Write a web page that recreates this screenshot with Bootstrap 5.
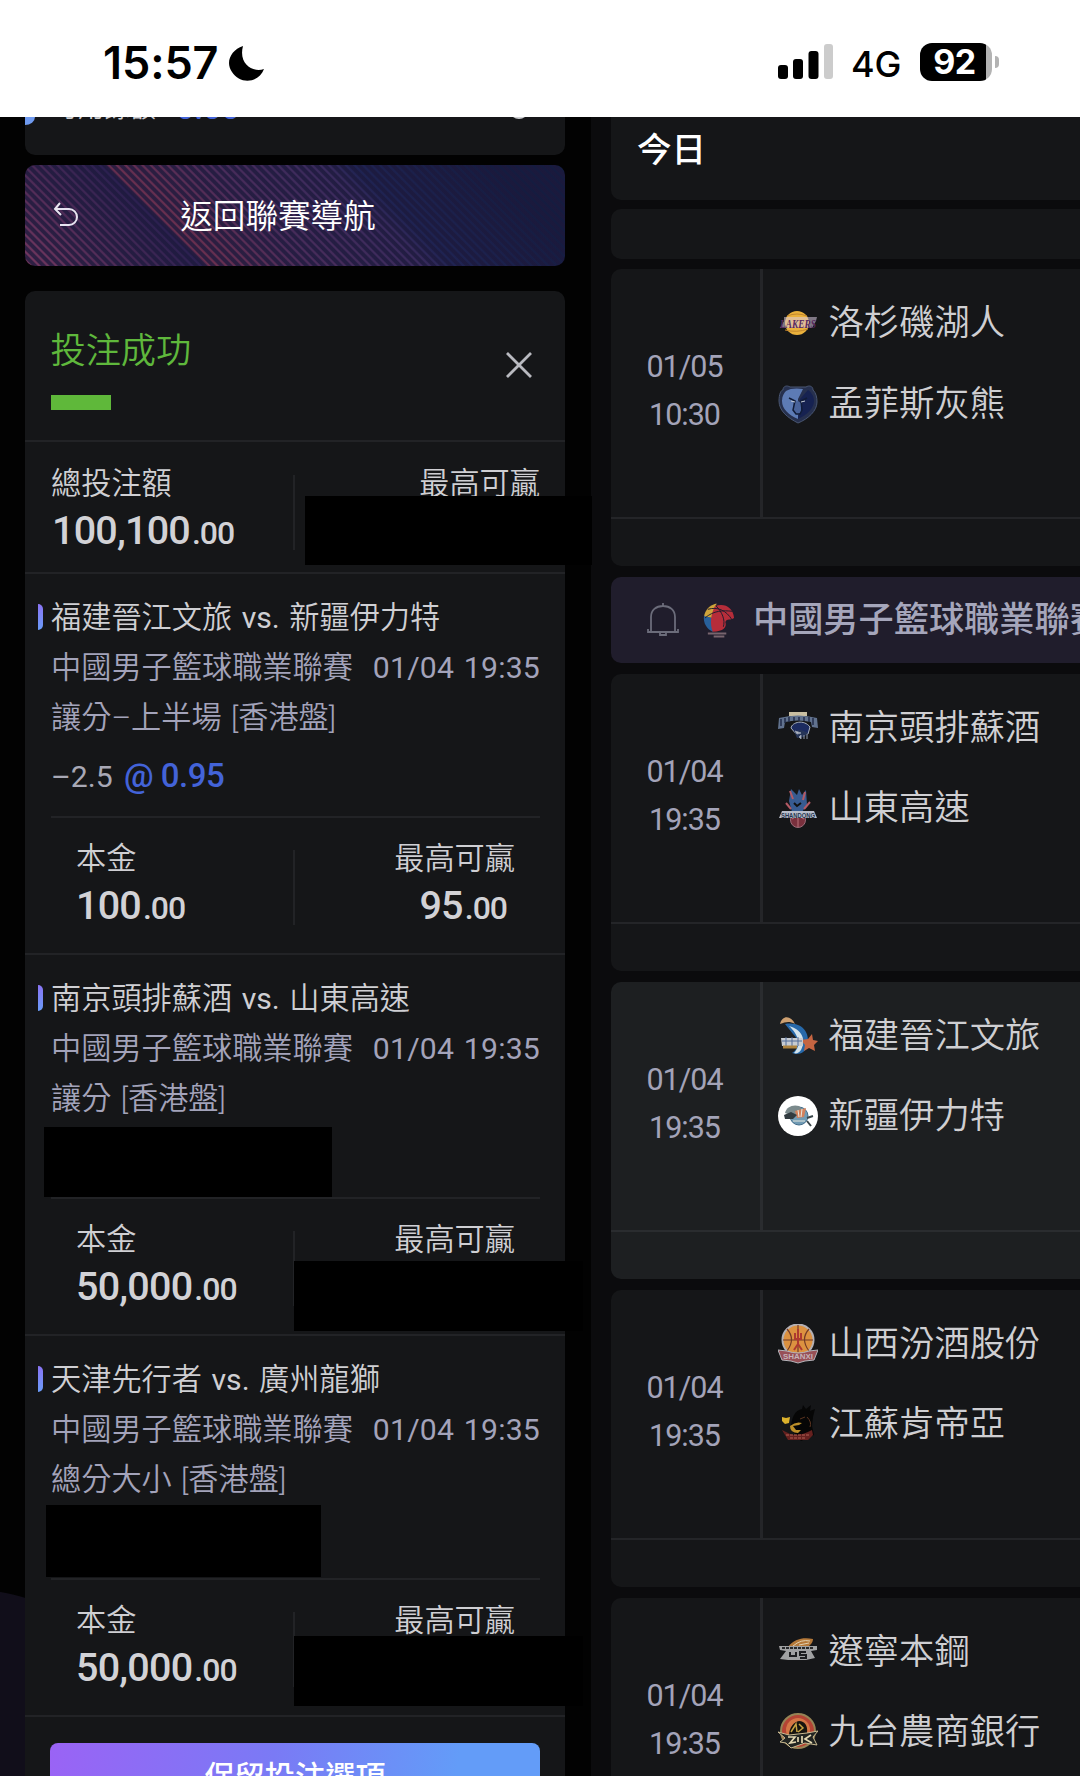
<!DOCTYPE html>
<html lang="zh-Hant">
<head>
  <meta charset="UTF-8" />
  <meta name="viewport" content="width=device-width, initial-scale=1" />
  <title>投注成功</title>
  <link href="https://cdn.jsdelivr.net/npm/bootstrap@5.3.0/dist/css/bootstrap.min.css" rel="stylesheet" />
  <style>
    body {
      width: 1080px;
      height: 1776px;
      overflow: hidden;
      background: #020202;
      color: #cfcfd3;
      font-family: Roboto, "Noto Sans CJK TC", sans-serif;
      font-size: 30.2px;
      font-weight: 350;
      line-height: 50.5px;
      white-space: nowrap;
    }

    /* Status bar */
    .status-bar { height: 117px; padding: 7px 81px 0 103px; font-family: Inter, sans-serif; }
    .clock { font-size: 45px; font-weight: 600; letter-spacing: -.1px; padding-top: 2px; }
    .moon { margin-left: 11px; }
    .net-type { font-size: 36px; font-weight: 500; letter-spacing: -.3px; margin: 0 19px 0 17px; }
    .battery { width: 72px; height: 38px; border-radius: 12px; background: linear-gradient(90deg, #000 66px, #b3b3b3 66px); font-size: 34px; font-weight: 700; line-height: 38px; padding-right: 3px; letter-spacing: -.5px; }
    .battery-tip { width: 4px; height: 12px; margin-left: 3px; border-radius: 0 5px 5px 0; background: #b3b3b3; }

    /* Left column */
    .slip-col { width: 591px; height: 1659px; padding: 0 26px 0 25px; background: radial-gradient(circle at -30px 1656px, #110e1a 183px, transparent 184px); }
    .panel { background: #151618; border-radius: 10px; }
    .balance { height: 38px; border-radius: 0 0 10px 10px; overflow: hidden; margin-bottom: 10px; line-height: 30px; padding-left: 27px; }
    .balance > * { margin-top: -24px; height: 30px; }
    .balance-dot { width: 20px; height: 20px; border-radius: 50%; background: #cfd0d3; margin: -18px 36px 0 auto !important; }
    .balance-knob { width: 20px; height: 16px; border-radius: 50%; background: #6f9af0; margin: -8px 17px 0 -37px !important; }
    .back-btn {
      height: 101px;
      border-radius: 10px;
      margin-bottom: 25px;
      padding-top: 4px;
      color: #fff;
      font-size: 32.6px;
      background:
        repeating-linear-gradient(45deg, rgba(28, 25, 60, .78) 0 2.6px, transparent 3.8px 4.8px, rgba(28, 25, 60, .78) 6px),
        linear-gradient(45deg, #74375e 0, #2b2050 126px, #6b2f4e 131px, #4a2c5a 200px, #382a5c 284px, #1f2352 302px, #151c40 400px);
    }
    .back-icon { left: 28px; top: 37px; }
    .slip-head { height: 151px; padding: 34px 33px 0 25.5px; border-bottom: 2px solid #222326; }
    .slip-title { color: #5fb83c; font-size: 35.2px; line-height: 52px; }
    .green-bar { width: 60px; height: 15px; margin-top: 18px; background: #5fb83a; }
    .summary { height: 132px; padding: 2px 25px 0 26px; border-bottom: 2px solid #222326; }
    .bet { height: 381px; padding: 19px 25px 0 26px; border-bottom: 2px solid #222326; word-spacing: 2px; }
    .bet-mark { left: -13px; top: 11px; width: 5px; height: 26px; border-radius: 0 5px 5px 0; background: linear-gradient(#8a74f5, #6a9cf8); }
    .bet-line { height: 50px; }
    .latin { font-weight: 400; }
    .muted-text { color: #a3a3ba; }
    .bet-date { letter-spacing: .2px; }
    .odds-row { height: 75px; padding-top: 8px; border-bottom: 2px solid #222326; color: #a8a8b5; word-spacing: 0; }
    .odds { color: #4363d8; font-weight: 500; font-size: 33px; letter-spacing: -.5px; }
    .stake { padding-top: 16px; }
    .bet .stake { padding: 17px 25px 0 25px; }
    .stake-label { line-height: 48px; }
    .stake-sep { width: 2px; height: 75px; margin: 15px 2px 0 -2px; background: #222326; }
    .amount { line-height: 46px; font-size: 39.5px; font-weight: 500; color: #d2d2d6; letter-spacing: -.8px; padding-left: 1px; }
    .amount small { font-size: 32px; margin-left: 2px; letter-spacing: -1px; font-weight: 500; }
    .bet .amount { padding-left: 0; }
    .cover { background: #000; z-index: 2; }
    .keep-btn { height: 70px; margin: 26px 25px 0 25px; border-radius: 8px; color: #fff; font-weight: 500; line-height: 70px; background: linear-gradient(100deg, #9a63f5, #7a7af5 45%, #639cf8 82%); }

    /* Right column */
    .match-col { width: 489px; height: 1659px; padding-left: 20px; background: #0b0b0d; overflow: hidden; }
    .match-col .panel, .league { margin-right: -20px; }
    .day-head { height: 83px; margin-bottom: 9px; padding: 8px 26px; border-radius: 0 0 0 10px; color: #fff; font-size: 34.5px; font-weight: 500; }
    .strip { height: 50px; margin-bottom: 10px; }
    .league { height: 86px; margin-bottom: 10.5px; padding-left: 36px; border-radius: 10px; background: #201d2c; color: #a5a6bb; font-size: 35.2px; font-weight: 500; }
    .league-logo { margin: 0 17px 0 24px; }
    .match { height: 297px; margin-bottom: 11px; overflow: hidden; }
    .match.live { background: #1d1f21; }
    .match.live .match-main, .match.live .kickoff { border-color: #2a2c2f; }
    .match-main { height: 250px; border-bottom: 2px solid #242528; }
    .kickoff { width: 152px; border-right: 3px solid #242528; padding: 74px 2px 0 0; color: #a3a3b8; font-size: 30.5px; font-weight: 450; line-height: 48px; letter-spacing: -1px; box-sizing: border-box; }
    .teams { padding: 14px 0 0 15px; font-size: 35.3px; color: #cfcfd2; }
    .team { height: 80.5px; gap: 10.5px; }
  </style>
</head>
<body>
  <!-- Status bar -->
  <header class="status-bar bg-white text-black d-flex align-items-center">
    <span class="clock">15:57</span>
    <svg class="moon mt-1" width="38" height="38" viewBox="0 0 38 38"><path d="M14 1C2 5-4 17 3 27c8 13 27 11 32-3C25 28 9 20 14 1z" fill="#000" /></svg>
    <svg class="ms-auto" width="56" height="36" viewBox="0 0 56 36">
      <rect x="0" y="21" width="10" height="14" rx="3" />
      <rect x="15" y="15" width="10" height="20" rx="3" />
      <rect x="30.500" y="7" width="10" height="28" rx="3" />
      <rect x="46" y="0" width="9" height="35" rx="3" fill="#ccc" />
    </svg>
    <span class="net-type pt-1">4G</span>
    <span class="battery text-white text-center">92</span>
    <span class="battery-tip"></span>
  </header>

  <main class="d-flex">
    <!-- Bet slip -->
    <section class="slip-col flex-shrink-0">
      <div class="panel balance d-flex">
        <span class="balance-knob"></span>
        <span style="font-size:26px">可用餘額</span>
        <span class="odds ms-3 ps-1">0.00</span>
        <span class="balance-dot"></span>
      </div>
      <div class="back-btn d-flex align-items-center position-relative">
        <svg class="back-icon position-absolute" width="26" height="26" viewBox="0 0 26 26" fill="none" stroke="#e8e4f0" stroke-width="2"><path d="M7 1L2 7l6 6M2 7h14a8 8 0 0 1 0 16H7" /></svg>
        <span class="mx-auto" style="padding-right:34px">返回聯賽導航</span>
      </div>
      <div class="panel">
        <div class="slip-head d-flex justify-content-between">
          <div>
            <div class="slip-title">投注成功</div>
            <div class="green-bar"></div>
          </div>
          <svg style="margin-top:22px" width="26" height="34" viewBox="0 0 26 34" fill="none" stroke="#b9bac0" stroke-width="2.800"><path d="M1 6l24 24M25 6L1 30" /></svg>
        </div>
        <div class="summary position-relative">
          <div class="stake d-flex">
            <div class="col">
              <div class="stake-label">總投注額</div>
              <div class="amount">100,100<small>.00</small></div>
            </div>
            <div class="stake-sep"></div>
            <div class="col text-end">
              <div class="stake-label">最高可贏</div>
            </div>
          </div>
          <div class="cover position-absolute" style="left:280px;top:54px;width:287px;height:69px"></div>
        </div>
        <div id="bets"></div>
        <div class="keep-btn text-center">保留投注選項</div>
      </div>
    </section>

    <!-- Matches -->
    <section class="match-col">
      <div class="panel day-head">今日</div>
      <div class="panel strip"></div>
      <div id="nba"></div>
      <div class="league d-flex align-items-center">
        <svg class="flex-shrink-0" width="32" height="36" viewBox="0 0 32 36" fill="none" stroke="#6b6c7a" stroke-width="1.800"><path d="M4 30V15C4 8 9 4 16 4s12 4 12 11v15M1 27v3h30v-3M16 4V1M13 31v2h6v-2" /></svg>
        <svg class="league-logo flex-shrink-0" width="33" height="36" viewBox="0 0 34 36">
          <path d="M14 1C7 3 2 7 1 15l9 1z" fill="#cfa43b" />
          <path d="M1 14c-1 7 3 14 9 16l4-13z" fill="#28609b" />
          <path d="M10 30c-3-9-2-17 2-26C22 0 31 5 32 16c-4 3-7 0-9 4 2 5-2 10-13 10z" fill="#b62d3a" />
          <path d="M5 7c10-3 19 1 25 11M2 16c9-8 19-8 28-7M13 3c7 7 10 15 8 22" fill="none" stroke="#201d2c" />
          <path d="M5 32h19M11 35h11" stroke="#78656e" stroke-width="2" />
        </svg>
        <span>中國男子籃球職業聯賽</span>
      </div>
      <div id="cba"></div>
    </section>
  </main>

  <!-- Team logos -->
  <svg class="d-none">
    <symbol id="lakers" viewBox="0 0 40 40">
      <circle cx="19" cy="20" r="12" fill="#eab13c" />
      <path d="M9 13q10-4 20 0M7 27q12 3 23-1" fill="none" stroke="#c2862e" />
      <path d="M6 14h33l-1 4-4 7H2l4-7z" fill="#d8cbe0" opacity=".55" />
      <text x="2" y="25" font-family="Liberation Serif" font-size="12" font-weight="700" font-style="italic" textLength="36" lengthAdjust="spacingAndGlyphs" fill="#58295e">LAKERS</text>
    </symbol>
    <symbol id="grizzlies" viewBox="0 0 40 40">
      <path d="M20 39C10 34 1 27 1 17 1 10 3 6 5 6c0-4 4-5 7-3h16c3-2 7-1 7 3 3 3 4 7 4 12 0 9-9 17-19 21z" fill="#26304e" stroke="#4a5772" />
      <path d="M20 35C11 31 4 25 4 17c0-5 2-8 4-10 4-3 12-3 17-2l-5 10z" fill="#5d7bb5" />
      <path d="M20 35c9-4 16-11 16-18 0-5-3-9-6-11l-8 9z" fill="#162251" />
      <path d="M15 18v8l3 4 2 1 3-3v-9l-3-2z" fill="#49639b" />
      <path d="M11 14l6 3-2 9 3 4h4l2-4-1-9 6-3" fill="none" stroke="#111c38" stroke-width="1.500" />
      <path d="M13 17l4 1M23 18l4-1" stroke="#c2cad4" />
    </symbol>
    <symbol id="nanjing" viewBox="0 0 40 40">
      <path d="M11 4h18v4H11z" fill="#c9bfa2" />
      <path d="M1 10q19-5 38 0l1 10-6-1-1-5q-13-3-26 0l-1 6-6 1z" fill="#61728e" />
      <path d="M3 11v7M7 10v5M11 9v5M16 9v4M21 9v4M26 9v4M31 9v5M35 10v7" stroke="#222d49" stroke-width="1.500" />
      <path d="M13 20c1-6 13-9 19-1l-2 7-5-2-6 3z" fill="#1c2b60" stroke="#aab2c0" />
      <path d="M16 23l7-1 7 3-4 4-7 1z" fill="#263557" />
      <path d="M17 23l6 2-4 1zM21 29l2-2v4zM26 27v4M29 26v5" fill="#c7cad0" stroke="#8f98aa" />
    </symbol>
    <symbol id="shandong" viewBox="0 0 40 40">
      <path d="M11 13L13 1l6 6 2-6 3 6 4-5 1 15-5 7H14z" fill="#385b91" />
      <path d="M12 3l3 8M27 4l-2 8M8 15l5 6M32 14l-6 7" stroke="#b45a65" stroke-width="2" />
      <circle cx="20" cy="32" r="7.500" fill="#79303d" stroke="#9c6c79" />
      <path d="M14 31q6-5 12 0M20 25v14" fill="none" stroke="#b9737b" />
      <path d="M4 23h32l3 7H1z" fill="#b8bdca" />
      <text x="3" y="29.500" font-family="Liberation Sans" font-size="7" font-weight="700" textLength="34" lengthAdjust="spacingAndGlyphs" fill="#26364f">SHANDONG</text>
      <path d="M16 15l3 3 4-3" fill="none" stroke="#111" stroke-width="2" />
    </symbol>
    <symbol id="fujian" viewBox="0 0 40 40">
      <path d="M2 8c2-9 11-9 15 0C11 5 8 6 2 8z" fill="#cda071" />
      <path d="M7 8c18-3 26 10 22 23-3 7-9 8-15 6 7-4 8-13 1-19z" fill="#2769aa" />
      <path d="M11 10c12 3 18 13 12 24-2 3-5 4-7 3 8-8 4-19-5-27z" fill="#d2e2eb" />
      <path d="M34 18l1 6 5 1-4 4 1 6-6-3-5 3 1-6-4-5 7-1z" fill="#c56542" />
      <path d="M3 22h22v8H4z" fill="#c6cbd1" />
      <path d="M4 25h20M8 21v9M14 21v9M20 21v9" stroke="#526d98" />
      <path d="M5 31h14" stroke="#ad823d" stroke-width="3" />
    </symbol>
    <symbol id="xinjiang" viewBox="0 0 40 40">
      <circle cx="20" cy="20" r="20" fill="#fff" />
      <circle cx="21" cy="20" r="9" fill="#719bb4" stroke="#426d8b" />
      <path d="M7 17c1-6 8-9 14-7l5 5-10 5z" fill="#7b8a8c" />
      <path d="M17 15l11-3-2 9-7 1z" fill="#d3815c" />
      <path d="M6 19l7-3 6 3-4 4H7z" fill="#313b40" />
      <path d="M20 14l1 7M24 13l-1 8M15 25h12" stroke="#e8e8de" />
      <path d="M29 22l6-2M29 25l4 5" stroke="#394549" stroke-width="2" />
    </symbol>
    <symbol id="shanxi" viewBox="0 0 40 40">
      <circle cx="20" cy="16" r="15.500" fill="#dc9140" stroke="#b4b0b4" stroke-width="2" />
      <path d="M20 1v27M5 16h30M9 5q9 10 0 22M31 5q-9 10 0 22" fill="none" stroke="#723a27" stroke-width="1.200" />
      <path d="M17 9v6h6V9M20 5v15l-4 6M20 20l4 6" fill="none" stroke="#ae3930" stroke-width="2" />
      <path d="M0 26l9 1q11 4 22 0l9-1-4 10-9 1-7 2-7-2-9-1z" fill="#985057" stroke="#b4b5bb" />
      <text x="5" y="35" font-family="Liberation Sans" font-size="8" font-weight="700" textLength="30" lengthAdjust="spacingAndGlyphs" fill="#c6b2b8">SHANXI</text>
    </symbol>
    <symbol id="jiangsu" viewBox="0 0 40 40">
      <path d="M13 25C13 14 17 6 24 5l1-4 3 4 5-4-1 6 5-2-2 8-1 9 2 9-13 6z" fill="#060606" />
      <path d="M4 13l4 1 4-1-1 6-4 1-3-3z" fill="#dbb12c" />
      <path d="M12 22q6-5 12-3l-3 2-6 1 3 4h5l-3 3q-8 0-8-7z" fill="#bd8f29" />
      <path d="M29 13q5 5 3 10M22 15l5-2" stroke="#5b3420" fill="none" />
      <path d="M4 26l8 4q9 3 22-4l1 5-5 5H10z" fill="#65211f" />
      <path d="M8 31h24M12 34h16" stroke="#b36155" stroke-dasharray="3 1" />
    </symbol>
    <symbol id="liaoning" viewBox="0 0 40 40">
      <path d="M10 15C16 7 25 5 35 7c0 5-5 9-13 9z" fill="#b57939" />
      <path d="M15 14q8-7 17-5M21 13l10-2" fill="none" stroke="#e1cfae" />
      <path d="M1 14h38v4l-6 1 4 7-9 2H10l-8-1 6-8-6-1z" fill="#a0a1a2" />
      <path d="M4 16h32" stroke="#27282a" stroke-width="2" stroke-dasharray="3 1" />
      <path d="M12 20v4h6v-4M28 20h-6v3h6v3h-6" fill="none" stroke="#1d1e20" stroke-width="2" />
    </symbol>
    <symbol id="jiutai" viewBox="0 0 40 40">
      <circle cx="20" cy="19" r="17" fill="#b54434" stroke="#968355" stroke-width="2" />
      <circle cx="20" cy="18" r="12" fill="#d47645" />
      <path d="M11 24c0-9 5-14 10-15 6 0 9 5 8 12l-5 3z" fill="#17140f" />
      <path d="M13 20l5-8 1 8M21 12l4 4-5 4" fill="none" stroke="#c6a243" stroke-width="1.500" />
      <path d="M0 20l11 3 18-2 11-2-5 6 4 8-12-2-14 5-5-5-6-1 5-4z" fill="#222522" stroke="#c9ba91" />
      <path d="M10 25h7l-5 6 6-1M20 25v5M24 24v7M33 23l-6 4 7 4" fill="none" stroke="#e3d8b2" stroke-width="1.700" />
    </symbol>
  </svg>

  <script src="https://cdn.jsdelivr.net/npm/bootstrap@5.3.0/dist/js/bootstrap.bundle.min.js"></script>
  <script>
    const bets = [
      { home: '福建晉江文旅', away: '新疆伊力特', type: '讓分–上半場 [香港盤]', line: '–2.5', odds: '0.95', stake: '100', win: '95', covers: [] },
      { home: '南京頭排蘇酒', away: '山東高速', type: '讓分 [香港盤]', stake: '50,000', covers: [[19, 172, 288, 70], [269, 306, 289, 70]] },
      { home: '天津先行者', away: '廣州龍獅', type: '總分大小 [香港盤]', stake: '50,000', covers: [[21, 169, 275, 72], [269, 300, 289, 70]] }
    ];

    const nba = [
      { date: '01/05', time: '10:30', teams: [['lakers', '洛杉磯湖人'], ['grizzlies', '孟菲斯灰熊']] }
    ];

    const cba = [
      { date: '01/04', time: '19:35', teams: [['nanjing', '南京頭排蘇酒'], ['shandong', '山東高速']] },
      { date: '01/04', time: '19:35', live: true, teams: [['fujian', '福建晉江文旅'], ['xinjiang', '新疆伊力特']] },
      { date: '01/04', time: '19:35', teams: [['shanxi', '山西汾酒股份'], ['jiangsu', '江蘇肯帝亞']] },
      { date: '01/04', time: '19:35', teams: [['liaoning', '遼寧本鋼'], ['jiutai', '九台農商銀行']] }
    ];

    document.getElementById('bets').innerHTML = bets.map(b => `
      <div class="bet position-relative">
        <div class="bet-line position-relative"><span class="bet-mark position-absolute"></span>${b.home}<span class="latin"> vs. </span>${b.away}</div>
        <div class="bet-line d-flex justify-content-between muted-text"><span>中國男子籃球職業聯賽</span><span class="bet-date latin">01/04 19:35</span></div>
        <div class="bet-line muted-text">${b.type}</div>
        <div class="odds-row">${b.odds ? `<span class="latin">${b.line}</span> <span class="odds ms-1">@ ${b.odds}</span>` : ''}</div>
        <div class="stake d-flex">
          <div class="col">
            <div class="stake-label">本金</div>
            <div class="amount">${b.stake}<small>.00</small></div>
          </div>
          <div class="stake-sep"></div>
          <div class="col text-end">
            <div class="stake-label">最高可贏</div>
            ${b.win ? `<div class="amount pe-2">${b.win}<small>.00</small></div>` : ''}
          </div>
        </div>
        ${b.covers.map(c => `<div class="cover position-absolute" style="left:${c[0]}px;top:${c[1]}px;width:${c[2]}px;height:${c[3]}px"></div>`).join('')}
      </div>
    `).join('');

    function renderMatches(id, list) {
      document.getElementById(id).innerHTML = list.map(m => `
        <div class="panel match ${m.live ? 'live' : ''}">
          <div class="match-main d-flex">
            <div class="kickoff text-center"><div>${m.date}</div><div>${m.time}</div></div>
            <div class="teams">
              ${m.teams.map(t => `
                <div class="team d-flex align-items-center">
                  <svg width="40" height="40"><use href="#${t[0]}" /></svg>
                  <span>${t[1]}</span>
                </div>
              `).join('')}
            </div>
          </div>
        </div>
      `).join('');
    }

    renderMatches('nba', nba);
    renderMatches('cba', cba);
  </script>
</body>
</html>
